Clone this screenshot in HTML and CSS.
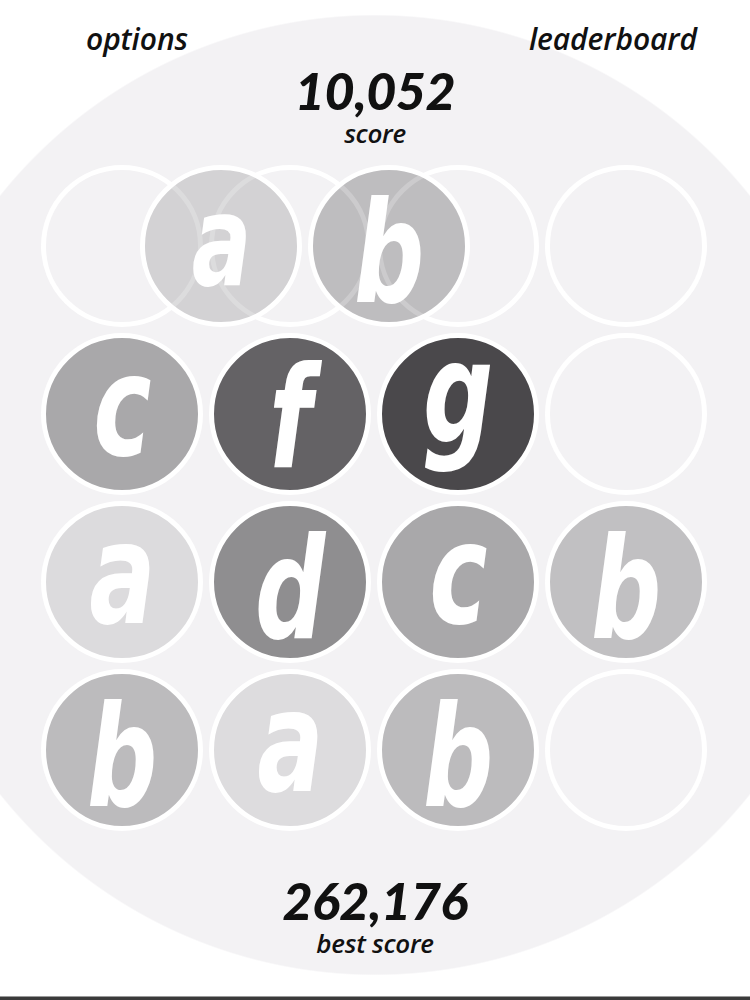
FILE: index.html
```html
<!DOCTYPE html>
<html>
<head>
<meta charset="utf-8">
<link rel="stylesheet" href="styles.css">
</head>
<body>
<div class="screen">
  <header class="top">
    <span class="link">options</span>
    <span class="link">leaderboard</span>
  </header>
  <div class="score">
    <div class="num">10,052</div>
    <div class="label">score</div>
  </div>
  <div class="board">
    <div class="cell ring-top"></div>
    <div class="cell ring-top"><div class="tile moving m-a"><span class="ch lx small">a</span></div></div>
    <div class="cell ring-top"><div class="tile moving m-b"><span class="ch la">b</span></div></div>
    <div class="cell ring-top"></div>

    <div class="cell t-c"><span class="ch lx">c</span></div>
    <div class="cell t-f"><span class="ch lf">f</span></div>
    <div class="cell t-g"><span class="ch lg">g</span></div>
    <div class="cell"></div>

    <div class="cell t-a"><span class="ch lx">a</span></div>
    <div class="cell t-d"><span class="ch la">d</span></div>
    <div class="cell t-c"><span class="ch lx">c</span></div>
    <div class="cell t-b"><span class="ch la">b</span></div>

    <div class="cell t-b2"><span class="ch la">b</span></div>
    <div class="cell t-a2"><span class="ch lx">a</span></div>
    <div class="cell t-b2"><span class="ch la">b</span></div>
    <div class="cell"></div>
  </div>
  <div class="best">
    <div class="num">262,176</div>
    <div class="label">best score</div>
  </div>
  <div class="spacer"></div>
  <div class="bar"></div>
</div>
</body>
</html>
```
FILE: styles.css
```css
html, body {
  margin: 0;
  padding: 0;
  background: #ffffff;
}

.screen {
  width: 750px;
  height: 1000px;
  display: flex;
  flex-direction: column;
  overflow: hidden;
  background: radial-gradient(480px circle at 375px 495px, #f3f2f4 479px, #ffffff 480.5px);
  font-family: "Open Sans", Lato, sans-serif;
  font-style: italic;
  color: #111111;
}

.top {
  display: flex;
  justify-content: space-between;
  padding: 24px 53px 0 86px;
}

.link {
  font-size: 30px;
  font-weight: 600;
  line-height: 30px;
  letter-spacing: -0.1px;
}

.score {
  display: flex;
  flex-direction: column;
  align-items: center;
  margin-top: 8px;
}

.num {
  font-family: Lato, "Open Sans", sans-serif;
  font-size: 52px;
  font-weight: 900;
  line-height: 56px;
  letter-spacing: -0.5px;
}

.label {
  font-size: 26px;
  font-weight: 600;
  line-height: 28px;
  letter-spacing: -0.3px;
  margin-top: 1px;
}

.board {
  display: grid;
  grid-template-columns: repeat(4, 162px);
  grid-auto-rows: 162px;
  gap: 6px;
  margin: 18px 0 0 41px;
}

.cell {
  box-sizing: border-box;
  width: 162px;
  height: 162px;
  border: 5px solid #ffffff;
  border-radius: 50%;
  position: relative;
  display: flex;
  align-items: center;
  justify-content: center;
}

.ring-top::after {
  content: "";
  position: absolute;
  top: -5px;
  left: -5px;
  width: 162px;
  height: 162px;
  box-sizing: border-box;
  border: 5px solid rgba(255, 255, 255, 0.22);
  border-radius: 50%;
  z-index: 2;
}

.tile.moving {
  position: absolute;
  top: -5px;
  left: -5px;
  width: 162px;
  height: 162px;
  box-sizing: border-box;
  border: 5px solid #ffffff;
  border-radius: 50%;
  transform: translateX(-69px);
  z-index: 1;
  display: flex;
  align-items: center;
  justify-content: center;
}

.m-a { background: #d3d2d4; }
.m-b { background: #bebdbf; }

.t-a { background: #dcdbdd; }
.t-a2 { background: #dddcde; }
.t-b { background: #c1c0c2; }
.t-b2 { background: #bcbbbd; }
.t-c { background: #a9a8aa; }
.t-d { background: #8f8e90; }
.t-f { background: #646265; }
.t-g { background: #4a484b; }

.ch {
  font-family: "DejaVu Sans Condensed", "DejaVu Sans", sans-serif;
  font-style: oblique;
  font-weight: 700;
  font-size: 140px;
  line-height: 1;
  color: #ffffff;
  display: block;
}

.lx { transform: translateY(-7px) scaleX(0.78); }
.lx.small { transform: translateY(-4px) scale(0.9, 0.9) scaleX(0.78); }
.la { transform: translateY(8px) scaleX(0.78); }
.lf { transform: translateY(5px) scaleX(0.78); }
.lg { transform: translateY(-20px) scaleX(0.78); }

.best {
  display: flex;
  flex-direction: column;
  align-items: center;
  margin-top: 41px;
}

.spacer {
  flex: 1;
}

.bar {
  height: 3px;
  background: #3a3a3a;
  border-top: 1px solid #9a9a9a;
}
```
